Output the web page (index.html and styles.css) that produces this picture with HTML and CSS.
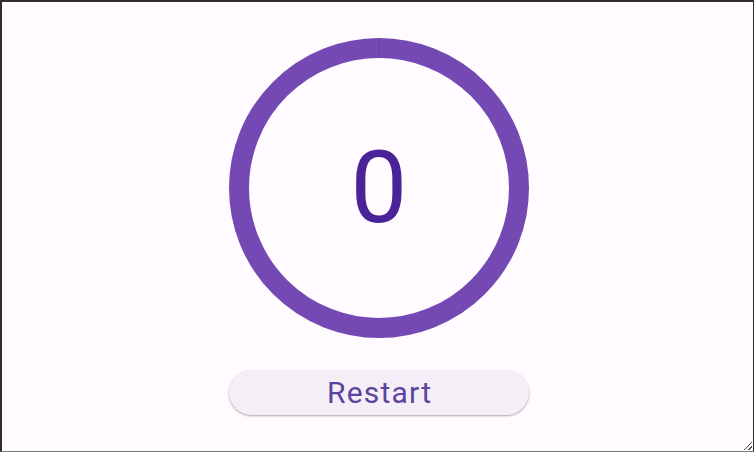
FILE: index.html
```html
<!DOCTYPE html>
<html>
<head>
<meta charset="utf-8">
<link rel="stylesheet" href="styles.css">
</head>
<body>
<div class="frame">
  <main class="content">
    <div class="timer">
      <svg class="ring" width="300" height="300" viewBox="0 0 300 300">
        <circle cx="150" cy="150" r="140" fill="none" stroke="#7449b3" stroke-width="20"/>
        <line x1="150" y1="0.5" x2="150" y2="19.5" stroke="#6b3fab" stroke-width="0.8"/>
      </svg>
      <span class="count">0</span>
    </div>
    <button class="restart">Restart</button>
  </main>
  <div class="grip"></div>
</div>
</body>
</html>
```
FILE: styles.css
```css
html, body {
  margin: 0;
  padding: 0;
  height: 100%;
}
body {
  background: #fffbfe;
  font-family: Roboto, "Liberation Sans", sans-serif;
}
.frame {
  position: relative;
  box-sizing: border-box;
  height: 100%;
  border-top: 2px solid #2e2e2e;
  border-left: 2px solid #2e2e2e;
  border-right: 1px solid #2e2e2e;
  border-bottom: 1px solid #7a7a7a;
  background: #fffbfe;
}
.content {
  display: flex;
  flex-direction: column;
  align-items: center;
  padding-top: 36px;
  padding-left: 3px;
  gap: 32px;
}
.timer {
  position: relative;
  width: 300px;
  height: 300px;
  display: flex;
  align-items: center;
  justify-content: center;
}
.ring {
  position: absolute;
  left: 0;
  top: 0;
}
.count {
  position: relative;
  font-size: 101px;
  line-height: 1;
  color: #4a2398;
  margin-top: -2px;
}
.restart {
  width: 300px;
  height: 45px;
  border: none;
  border-radius: 23px;
  background: #f4eff6;
  box-shadow: 0 1px 2px rgba(0, 0, 0, 0.28), 0 1px 3px rgba(0, 0, 0, 0.08);
  color: #5f429f;
  font-family: Roboto, "Liberation Sans", sans-serif;
  font-size: 30px;
  letter-spacing: 1.2px;
  text-indent: 1.2px;
  padding: 0;
  line-height: 1;
}
.grip {
  position: absolute;
  right: 1px;
  bottom: 1px;
  width: 8px;
  height: 8px;
  background: linear-gradient(135deg, transparent 45%, #555 45%, #555 55%, transparent 55%, transparent 75%, #555 75%, #555 85%, transparent 85%);
}
```
